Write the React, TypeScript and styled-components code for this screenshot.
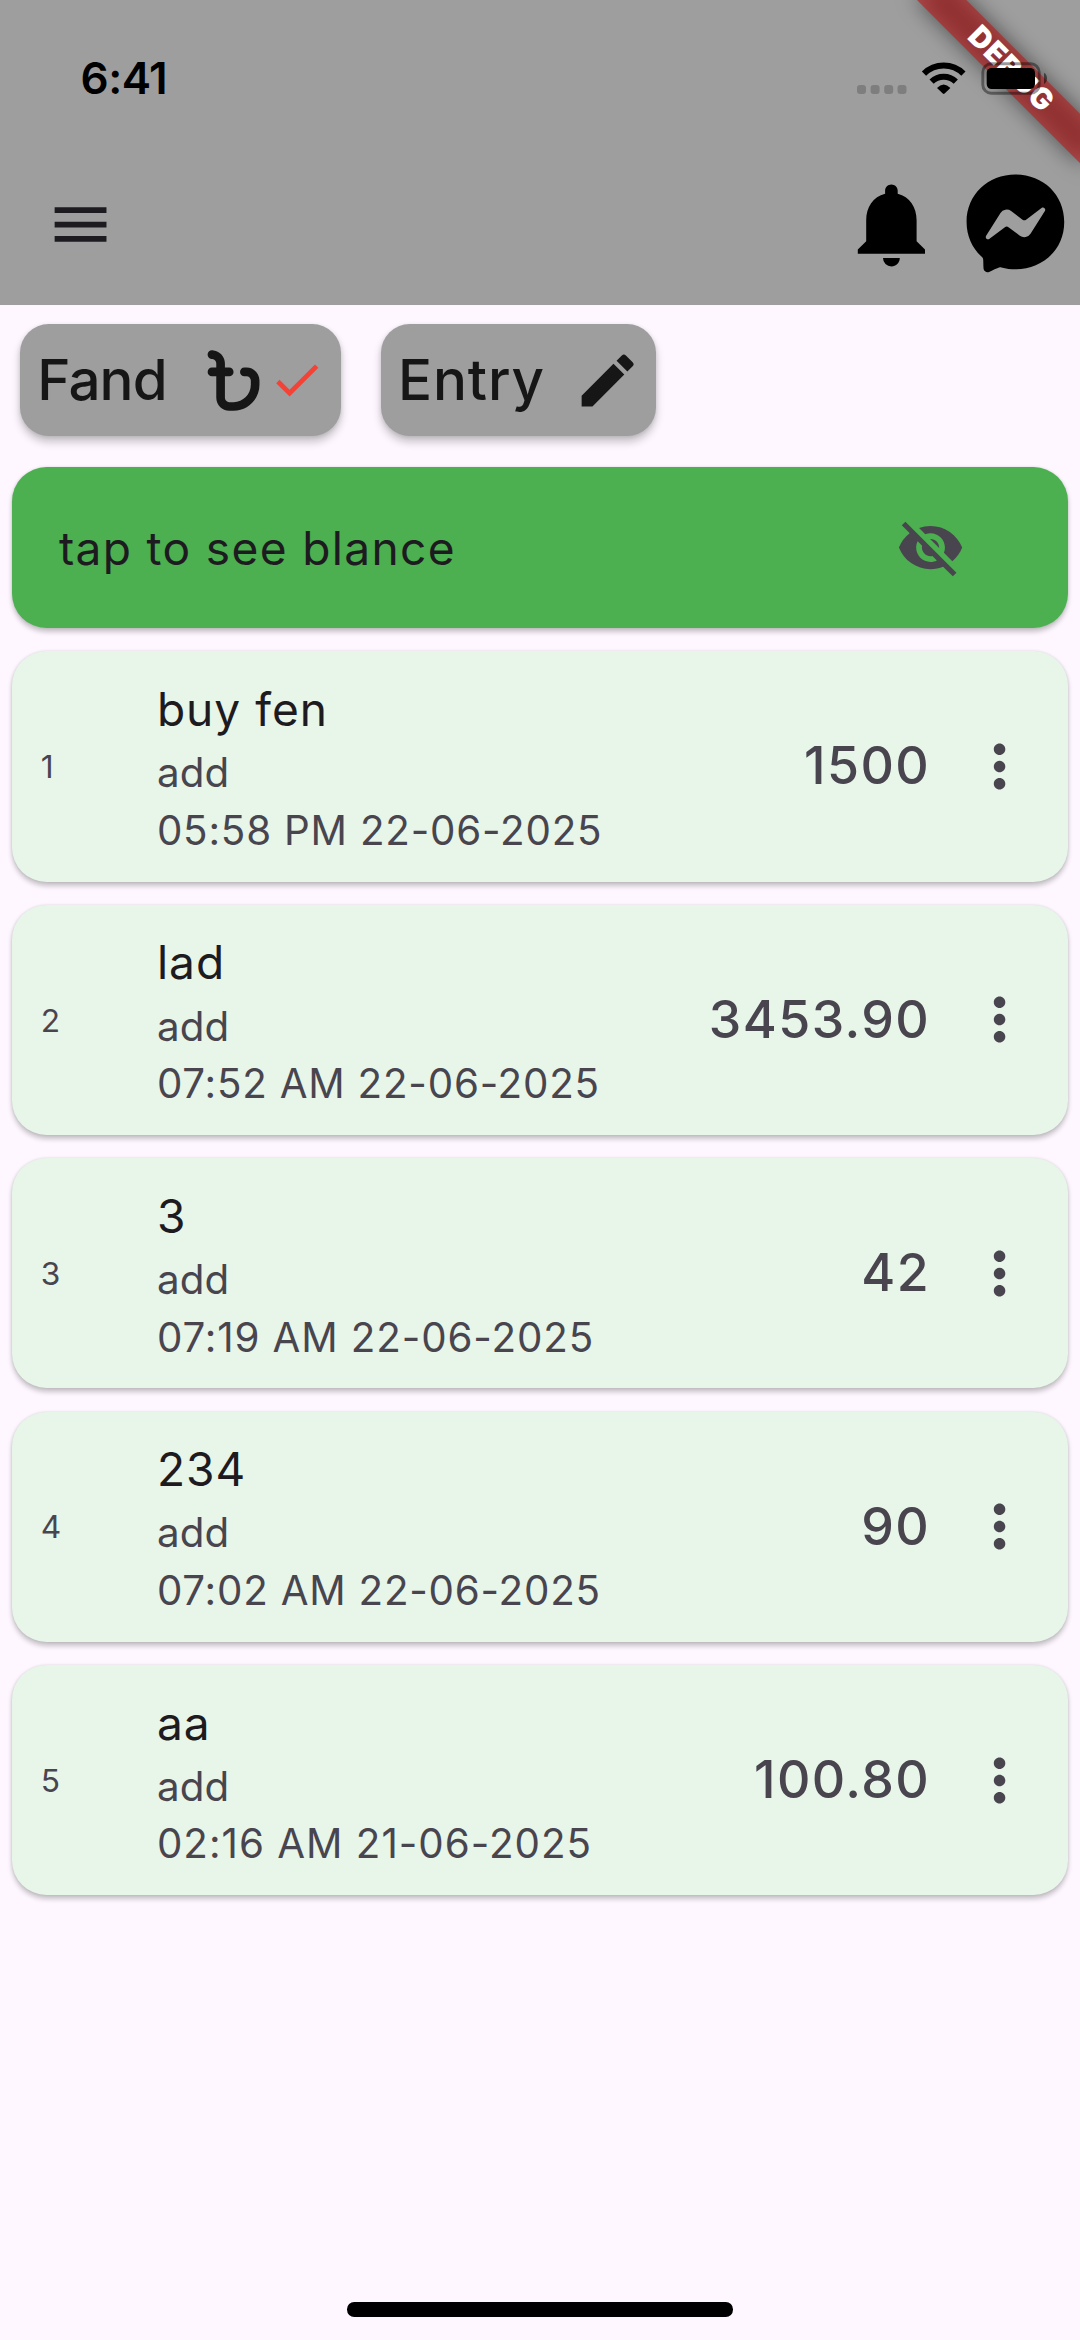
import React from 'react';
import styled, { createGlobalStyle } from 'styled-components';
import { MdMenu, MdNotifications, MdCheck, MdEdit, MdVisibilityOff, MdMoreVert } from 'react-icons/md';
import { FaFacebookMessenger } from 'react-icons/fa';
import { FaBangladeshiTakaSign } from 'react-icons/fa6';

const GlobalStyle = createGlobalStyle`
  * { box-sizing: border-box; }
  html, body { margin: 0; padding: 0; background: #fef7ff; }
  body { font-family: Inter, Roboto, "Liberation Sans", sans-serif; }
  svg { display: block; flex: none; }
`;

const Screen = styled.div`
  position: relative;
  display: flex;
  flex-direction: column;
  width: 1080px;
  height: 2340px;
  overflow: hidden;
  background: #fef7ff;
`;

const Header = styled.header`
  height: 305.28px;
  background: #9e9e9e;
  display: flex;
  flex-direction: column;
`;

const StatusBar = styled.div`
  height: 144px;
  display: flex;
  justify-content: space-between;
  align-items: flex-start;
  padding: 62px 33px 0 80.5px;
`;

const Clock = styled.span`
  font-size: 44px;
  font-weight: 600;
  line-height: 33px;
  letter-spacing: -0.5px;
  color: #000;
`;

const StatusIcons = styled.div`
  position: relative;
  z-index: 3;
  display: flex;
`;

const Toolbar = styled.div`
  height: 161.28px;
  display: flex;
  align-items: center;
  padding: 0 14.4px 0 46.4px;
  color: #000;
`;

const MenuButton = styled.div`
  color: #1d1b20;
  margin-right: auto;
`;

const ChatButton = styled.div`
  margin: -3px 0 0 23.4px;
`;

const BannerClip = styled.div`
  position: absolute;
  inset: 0 0 auto auto;
  width: 250px;
  height: 250px;
  overflow: hidden;
  z-index: 2;
`;

const BannerShadow = styled.div`
  position: absolute;
  left: 65.6px;
  top: 51.95px;
  width: 230.4px;
  height: 34.56px;
  transform: rotate(45deg);
  background: rgba(0, 0, 0, 0.5);
  filter: blur(11.4px);
`;

const Banner = styled.div`
  position: absolute;
  left: 65.6px;
  top: 51.95px;
  width: 230.4px;
  height: 34.56px;
  transform: rotate(45deg);
  background: rgba(183, 28, 28, 0.627);
  color: #fff;
  font-size: 29.4px;
  font-weight: 900;
  line-height: 34.56px;
  letter-spacing: 1.1px;
  text-align: center;
`;

const Actions = styled.div`
  display: flex;
  gap: 40px;
  padding: 18.7px 0 0 20.1px;
`;

const ActionButton = styled.div<{ $width: number }>`
  width: ${(p) => p.$width}px;
  height: 112.3px;
  border-radius: 28.8px;
  background: #9e9e9e;
  box-shadow: 0 6px 9px rgba(0, 0, 0, 0.22), 0 1px 4px rgba(0, 0, 0, 0.1);
  color: #161616;
  display: flex;
  align-items: center;
  padding-left: 17.2px;
`;

const ActionLabel = styled.span<{ $width: number; $tracking: number }>`
  width: ${(p) => p.$width}px;
  font-size: 56.5px;
  font-weight: 500;
  line-height: 72px;
  letter-spacing: ${(p) => p.$tracking}px;
  white-space: nowrap;
`;

const CheckMark = styled.div`
  color: #f44336;
`;

const Card = styled.div`
  border-radius: 34.56px;
  box-shadow: 0 3.5px 5px rgba(0, 0, 0, 0.22), 0 0 3px rgba(0, 0, 0, 0.1);
  display: flex;
  align-items: center;
`;

const BalanceCard = styled(Card)`
  height: 161.28px;
  margin: 30.7px 11.52px 0;
  padding: 0 103.7px 0 47.4px;
  justify-content: space-between;
  background: #4caf50;
  color: #49454f;
`;

const Title = styled.div<{ $tracking?: number }>`
  font-size: 46.08px;
  line-height: 69.12px;
  letter-spacing: ${(p) => p.$tracking ?? 1}px;
  color: #1d1b20;
  white-space: nowrap;
`;

const BalanceTitle = styled(Title)`
  padding-top: 1.4px;
`;

const List = styled.main`
  display: flex;
  flex-direction: column;
  gap: 23.04px;
  padding: 23.04px 11.52px 0;
`;

const EntryCard = styled(Card)`
  height: 230.4px;
  padding: 0 34.6px 0 29.2px;
  background: #e8f5e9;
  color: #49454f;
`;

const Index = styled.div`
  width: 116.2px;
  padding-top: 1.4px;
  font-size: 31.68px;
  line-height: 46.08px;
`;

const Details = styled.div`
  flex: 1;
  padding-top: 1.4px;
`;

const Meta = styled.div<{ $tracking: number }>`
  font-size: 40.32px;
  line-height: 57.6px;
  letter-spacing: ${(p) => p.$tracking}px;
  white-space: nowrap;
`;

const Amount = styled.div`
  font-size: 51.84px;
  font-weight: 500;
  line-height: 72px;
  letter-spacing: 1.44px;
  margin-right: 34.6px;
`;

const HomeIndicator = styled.div`
  width: 386.4px;
  height: 14.4px;
  margin: auto auto 23.3px;
  border-radius: 7.2px;
  background: #000;
`;

const StatusGlyphs = () => (
  <svg width="192" height="34" viewBox="855 62 192 34">
    <g fill="#7e7e7e">
      {[857, 870.6, 884.2, 897.5].map((x) => (
        <rect key={x} x={x} y="85" width="9" height="9" rx="3" />
      ))}
    </g>
    <g fill="none" stroke="#000" strokeWidth="6">
      <path d="M924 73.6 A28 28 0 0 1 963.4 73.6" />
      <path d="M931.6 81.6 A17.4 17.4 0 0 1 955.8 81.6" />
    </g>
    <path d="M937 88 Q943.6 81 950.4 88 L944.6 93.600 Q943.700 94.300 942.800 93.600Z" fill="#000" />
    <rect x="982.8" y="63.8" width="56.4" height="29.4" rx="8.5" fill="none" stroke="#000" strokeOpacity="0.4" strokeWidth="2.9" />
    <rect x="986.7" y="67.9" width="48.3" height="21.2" rx="5" fill="#000" />
    <path d="M1044 72.700 Q1047 74.500 1047 78.400 Q1047 82.300 1044 84Z" fill="#000" fillOpacity="0.5" />
  </svg>
);

const entries = [
  { title: 'buy fen', time: '05:58 PM 22-06-2025', amount: '1500', tracking: 0.8 },
  { title: 'lad', time: '07:52 AM 22-06-2025', amount: '3453.90', tracking: 0.78 },
  { title: '3', time: '07:19 AM 22-06-2025', amount: '42', tracking: 0.88 },
  { title: '234', time: '07:02 AM 22-06-2025', amount: '90', tracking: 0.78 },
  { title: 'aa', time: '02:16 AM 21-06-2025', amount: '100.80', tracking: 1 },
];

export default function App() {
  return (
    <Screen>
      <GlobalStyle />
      <Header>
        <StatusBar>
          <Clock>6:41</Clock>
          <StatusIcons>
            <StatusGlyphs />
          </StatusIcons>
        </StatusBar>
        <Toolbar>
          <MenuButton>
            <MdMenu size={69.12} />
          </MenuButton>
          <MdNotifications size={100.8} />
          <ChatButton>
            <FaFacebookMessenger size={100.8} />
          </ChatButton>
        </Toolbar>
      </Header>
      <BannerClip>
        <BannerShadow />
        <Banner>DEBUG</Banner>
      </BannerClip>
      <Actions>
        <ActionButton $width={320.7}>
          <ActionLabel $width={162} $tracking={-0.9}>
            Fand
          </ActionLabel>
          <FaBangladeshiTakaSign size={69.12} />
          <CheckMark>
            <MdCheck size={57.6} />
          </CheckMark>
        </ActionButton>
        <ActionButton $width={275.7}>
          <ActionLabel $width={175} $tracking={0.9}>
            Entry
          </ActionLabel>
          <MdEdit size={69.12} />
        </ActionButton>
      </Actions>
      <BalanceCard>
        <BalanceTitle $tracking={1.34}>tap to see blance</BalanceTitle>
        <MdVisibilityOff size={69.12} />
      </BalanceCard>
      <List>
        {entries.map((entry, i) => (
          <EntryCard key={entry.time}>
            <Index>{i + 1}</Index>
            <Details>
              <Title>{entry.title}</Title>
              <Meta $tracking={0.2}>add</Meta>
              <Meta $tracking={entry.tracking}>{entry.time}</Meta>
            </Details>
            <Amount>{entry.amount}</Amount>
            <MdMoreVert size={69.12} />
          </EntryCard>
        ))}
      </List>
      <HomeIndicator />
    </Screen>
  );
}
